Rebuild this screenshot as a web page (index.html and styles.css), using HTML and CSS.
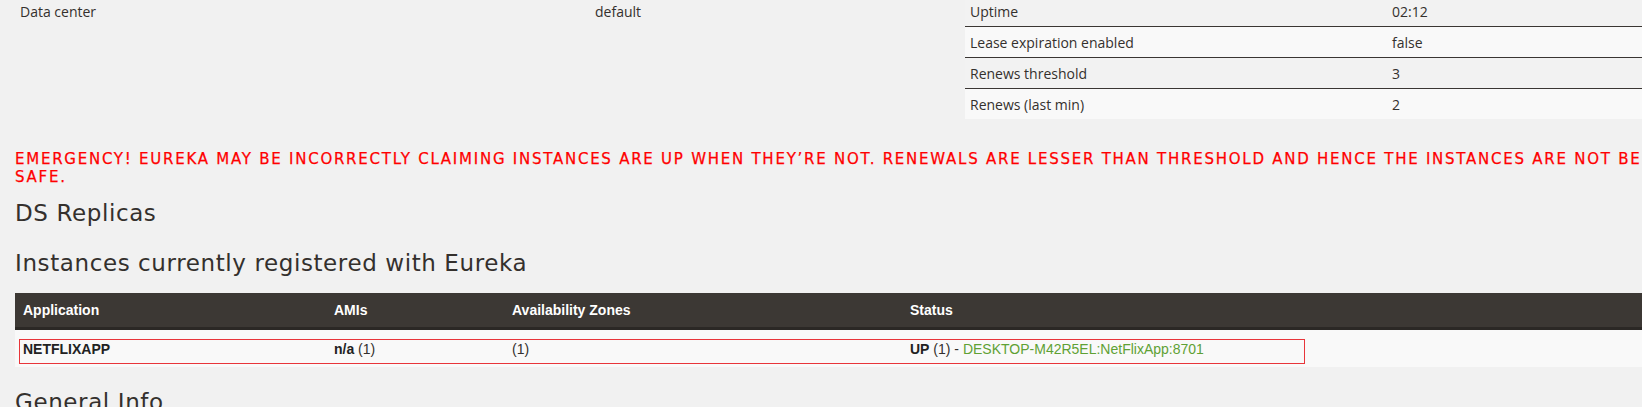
FILE: index.html
```html
<!DOCTYPE html>
<html lang="en">
<head>
<meta charset="utf-8">
<title>Eureka</title>
<link rel="stylesheet" href="styles.css">
</head>
<body>
<div class="page">
  <div class="status-row">
    <table class="info info-left">
      <tbody>
        <tr><td class="label">Data center</td><td>default</td></tr>
      </tbody>
    </table>
    <table class="info info-right">
      <tbody>
        <tr><td class="label">Uptime</td><td>02:12</td></tr>
        <tr><td class="label">Lease expiration enabled</td><td>false</td></tr>
        <tr><td class="label">Renews threshold</td><td>3</td></tr>
        <tr><td class="label">Renews (last min)</td><td>2</td></tr>
      </tbody>
    </table>
  </div>

  <h4 class="emergency">EMERGENCY! EUREKA MAY BE INCORRECTLY CLAIMING INSTANCES ARE UP WHEN THEY’RE NOT. RENEWALS ARE LESSER THAN THRESHOLD AND HENCE THE INSTANCES ARE NOT BEING EXPIRED JUST TO BE SAFE.</h4>

  <h1 class="title">DS Replicas</h1>
  <h1 class="title title-instances">Instances currently registered with Eureka</h1>

  <div class="instances-wrap">
    <table class="instances">
      <thead>
        <tr>
          <th class="c-app">Application</th>
          <th class="c-ami">AMIs</th>
          <th class="c-zone">Availability Zones</th>
          <th class="c-status">Status</th>
        </tr>
      </thead>
      <tbody>
        <tr>
          <td><b>NETFLIXAPP</b></td>
          <td><b>n/a</b> (1)</td>
          <td>(1)</td>
          <td><b>UP</b> (1) - <a class="inst-link" href="#">DESKTOP-M42R5EL:NetFlixApp:8701</a></td>
        </tr>
      </tbody>
    </table>
    <div class="highlight"></div>
  </div>

  <h1 class="title title-general">General Info</h1>
</div>
</body>
</html>
```

FILE: styles.css
```css
html, body {
  margin: 0;
  padding: 0;
  overflow: hidden;
}

body {
  background: #f1f1f1;
  color: #34302d;
  font-family: "Open Sans", "Liberation Sans", sans-serif;
  font-size: 14px;
}

.page {
  width: 1960px;
  padding-left: 15px;
}

.status-row {
  display: grid;
  grid-template-columns: 935px 1010px;
  column-gap: 15px;
  align-items: start;
  margin-top: -5px;
}

.info {
  border-collapse: collapse;
  width: 100%;
}

.info td {
  height: 30px;
  padding: 0 5px;
  border-top: 1px solid #3a3633;
  vertical-align: middle;
  color: #34302d;
}

.info tr:nth-child(even) td {
  background: #f9f9f9;
}

.info tr:nth-child(odd) td {
  background: #f2f2f2;
}

.info-left .label { width: 565px; }
.info-right .label { width: 412px; }
.info-left td { border-top-color: transparent; background: transparent !important; }

.emergency {
  margin: 31px 0 0 0;
  font-family: "DejaVu Sans", sans-serif;
  font-size: 15px;
  letter-spacing: 1.75px;
  line-height: 18px;
  font-weight: normal;
  color: #ff0000;
  -webkit-text-stroke: 0.25px #ff0000;
  width: 1900px;
}

.title {
  margin: 14px 0 0 0;
  font-family: "DejaVu Sans", sans-serif;
  font-weight: normal;
  font-size: 23px;
  letter-spacing: 0.6px;
  line-height: 26px;
  color: #34302d;
}

.title-instances { margin-top: 24px; }
.title-general { margin-top: 22px; }

.instances-wrap {
  position: relative;
  margin-top: 17px;
}

.instances {
  border-collapse: collapse;
  width: 1945px;
  font-family: "Liberation Sans", Arial, sans-serif;
}

.instances th {
  background: #3c3834;
  color: #ffffff;
  text-align: left;
  font-weight: bold;
  height: 34px;
  padding: 0 8px;
  border-bottom: 3px solid #2b2825;
  vertical-align: middle;
}

.c-app { width: 295px; }
.c-ami { width: 162px; }
.c-zone { width: 382px; }

.instances td {
  background: #f9f9f9;
  height: 37px;
  padding: 0 8px;
  vertical-align: middle;
  color: #34302d;
}

.instances td b { color: #222; }

.inst-link {
  color: #5fa134;
  text-decoration: none;
}

.highlight {
  position: absolute;
  left: 4px;
  top: 46px;
  width: 1284px;
  height: 23px;
  border: 1px solid #e8353a;
  pointer-events: none;
}
```
